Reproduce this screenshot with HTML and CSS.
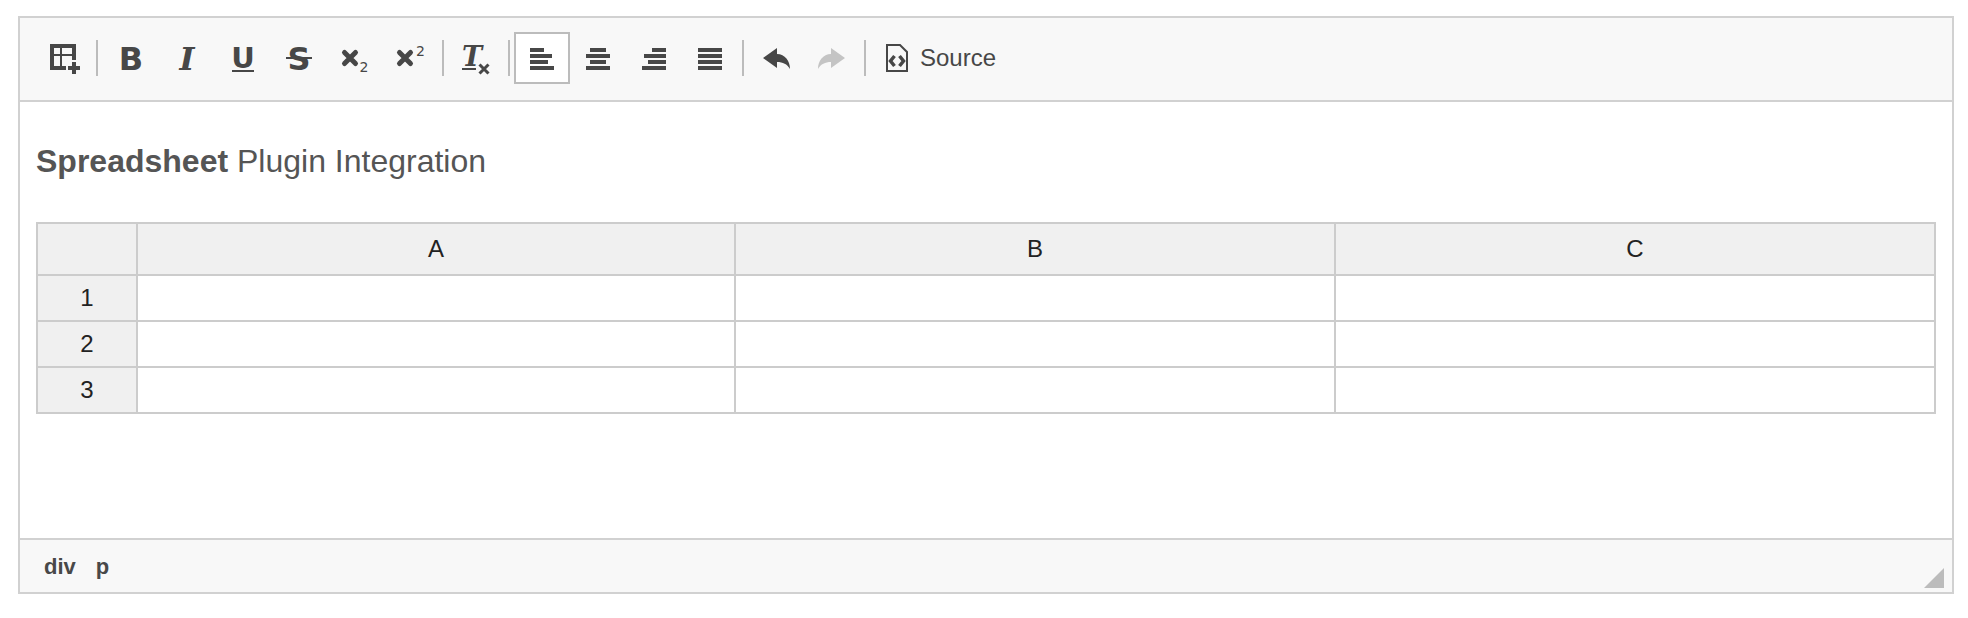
FILE: index.html
```html
<!DOCTYPE html>
<html lang="en">
<head>
  <meta charset="UTF-8">
  <title>Spreadsheet Plugin Integration</title>
  <link rel="stylesheet" href="styles.css">
</head>
<body>

  <div class="editor">
    <div class="toolbar">
      <span class="tool">
        <svg class="icon" viewBox="0 0 32 32">
          <path fill-rule="evenodd" d="M2 2H28V18H24V14H14V24H18V28H2ZM6 6V12H12V6ZM14 6V12H24V6ZM6 14V24H12V14Z"/>
          <path d="M24 20H28V24H32V28H28V32H24V28H20V24H24Z"/>
        </svg>
      </span>
      <span class="sep"></span>
      <span class="tool">
        <svg class="icon" viewBox="0 0 32 32"><text class="glyph sans" x="17" y="28" text-anchor="middle">B</text></svg>
      </span>
      <span class="tool">
        <svg class="icon" viewBox="0 0 32 32"><text class="glyph serif" x="17" y="28" text-anchor="middle">I</text></svg>
      </span>
      <span class="tool">
        <svg class="icon" viewBox="0 0 32 32">
          <text class="glyph sans small" x="17" y="26" text-anchor="middle">U</text>
          <rect x="6" y="28" width="22" height="2"/>
        </svg>
      </span>
      <span class="tool">
        <svg class="icon" viewBox="0 0 32 32">
          <text class="glyph sans" x="17" y="28" text-anchor="middle">S</text>
          <rect x="4" y="15" width="26" height="2"/>
        </svg>
      </span>
      <span class="tool">
        <svg class="icon" viewBox="0 0 32 32">
          <path class="cross" d="M6.500 10.500L17.500 21.500M17.500 10.500L6.500 21.500"/>
          <text class="tiny" x="21.500" y="30">2</text>
        </svg>
      </span>
      <span class="tool">
        <svg class="icon" viewBox="0 0 32 32">
          <path class="cross" d="M5.500 10.500L16.500 21.500M16.500 10.500L5.500 21.500"/>
          <text class="tiny" x="22" y="14">2</text>
        </svg>
      </span>
      <span class="sep"></span>
      <span class="tool">
        <svg class="icon" viewBox="0 0 32 32">
          <text class="glyph serif medium" x="12" y="24" text-anchor="middle">T</text>
          <rect x="2" y="26" width="14" height="2"/>
          <path class="cross thin" d="M19.500 22.500L28.500 31.500M28.500 22.500L19.500 31.500"/>
        </svg>
      </span>
      <span class="sep"></span>
      <span class="tool active">
        <svg class="icon" viewBox="0 0 32 32">
          <rect x="4" y="6" width="14" height="4"/><rect x="4" y="12" width="22" height="4"/>
          <rect x="4" y="18" width="18" height="4"/><rect x="4" y="24" width="24" height="4"/>
        </svg>
      </span>
      <span class="tool">
        <svg class="icon" viewBox="0 0 32 32">
          <rect x="8" y="6" width="16" height="4"/><rect x="4" y="12" width="24" height="4"/>
          <rect x="8" y="18" width="16" height="4"/><rect x="4" y="24" width="24" height="4"/>
        </svg>
      </span>
      <span class="tool">
        <svg class="icon" viewBox="0 0 32 32">
          <rect x="14" y="6" width="14" height="4"/><rect x="6" y="12" width="22" height="4"/>
          <rect x="10" y="18" width="18" height="4"/><rect x="4" y="24" width="24" height="4"/>
        </svg>
      </span>
      <span class="tool">
        <svg class="icon" viewBox="0 0 32 32">
          <rect x="4" y="6" width="24" height="4"/><rect x="4" y="12" width="24" height="4"/>
          <rect x="4" y="18" width="24" height="4"/><rect x="4" y="24" width="24" height="4"/>
        </svg>
      </span>
      <span class="sep"></span>
      <span class="tool">
        <svg class="icon" viewBox="0 0 32 32"><path d="M3 16L17 6V12C25 12 30 19 30 27C27 22 23 20 17 20V26Z"/></svg>
      </span>
      <span class="tool off">
        <svg class="icon" viewBox="0 0 32 32"><path d="M29 16L15 6V12C7 12 2 19 2 27C5 22 9 20 15 20V26Z"/></svg>
      </span>
      <span class="sep"></span>
      <span class="tool source">
        <svg class="icon" viewBox="0 0 32 32">
          <path class="outline" d="M5 3H18L25 10V29H5Z"/>
          <path class="outline bold" d="M12.500 14L8.500 19L12.500 24M17.500 14L21.500 19L17.500 24"/>
        </svg>
        <span class="tool-label">Source</span>
      </span>
    </div>

    <div class="content">
      <p class="title"><strong>Spreadsheet</strong> Plugin Integration</p>
      <table class="sheet">
        <colgroup>
          <col class="col-head">
          <col class="col-a">
          <col class="col-b">
          <col class="col-c">
        </colgroup>
        <thead>
          <tr><th></th><th>A</th><th>B</th><th>C</th></tr>
        </thead>
        <tbody>
          <tr><th>1</th><td></td><td></td><td></td></tr>
          <tr><th>2</th><td></td><td></td><td></td></tr>
          <tr><th>3</th><td></td><td></td><td></td></tr>
        </tbody>
      </table>
    </div>

    <div class="statusbar">
      <span class="path-item">div</span>
      <span class="path-item">p</span>
      <svg class="resizer" viewBox="0 0 20 20"><path d="M20 0V20H0Z"/></svg>
    </div>
  </div>

</body>
</html>
```

FILE: styles.css
```css
body {
  margin: 0;
  padding: 16px 14px 24px 18px;
  background-color: white;
  font-family: "Liberation Sans", Arial, sans-serif;
}
.editor {
  display: flex;
  flex-direction: column;
  height: 578px;
  border: 2px solid #d1d1d1;
  box-sizing: border-box;
}
.toolbar {
  display: flex;
  align-items: center;
  height: 84px;
  padding: 0 0 2px 16px;
  box-sizing: border-box;
  background-color: #f8f8f8;
  border-bottom: 2px solid #d1d1d1;
}
.tool {
  display: flex;
  align-items: center;
  justify-content: center;
  width: 56px;
  height: 52px;
  box-sizing: border-box;
  fill: #474747;
  color: #474747;
}
.tool.active {
  background-color: white;
  border: 2px solid #bcbcbc;
}
.tool.off {
  fill: #c4c4c4;
}
.tool.source {
  width: auto;
  padding-left: 12px;
}
.tool-label {
  margin-left: 6px;
  font-size: 24px;
}
.icon {
  width: 32px;
  height: 32px;
  overflow: visible;
}
.glyph {
  font-size: 32px;
  font-weight: bold;
}
.glyph.sans {
  font-family: "DejaVu Sans", sans-serif;
}
.glyph.serif {
  font-family: "DejaVu Serif", serif;
  font-style: italic;
}
.glyph.small {
  font-size: 29px;
}
.glyph.medium {
  font-size: 27px;
}
.tiny {
  font-family: "DejaVu Sans", sans-serif;
  font-size: 14px;
}
.cross {
  fill: none;
  stroke: #474747;
  stroke-width: 5;
  stroke-linecap: round;
}
.cross.thin {
  stroke-width: 3;
  stroke-linecap: butt;
}
.outline {
  fill: none;
  stroke: #474747;
  stroke-width: 2;
}
.outline.bold {
  stroke-width: 3.500;
}
.sep {
  width: 2px;
  height: 36px;
  margin: 0 4px;
  background-color: #bcbcbc;
}
.content {
  flex: 1;
  padding: 0 16px;
  background-color: white;
}
.title {
  margin: 41px 0 0;
  font-size: 32px;
  line-height: 36px;
  color: #555;
}
.sheet {
  width: 1898px;
  margin-top: 43px;
  table-layout: fixed;
  border-collapse: collapse;
  font-size: 24px;
  color: #222;
}
.col-head {
  width: 100px;
}
.col-a {
  width: 598px;
}
.col-b,
.col-c {
  width: 600px;
}
.sheet th,
.sheet td {
  padding: 0;
  border: 2px solid #ccc;
  height: 44px;
  font-weight: normal;
  text-align: center;
}
.sheet thead th {
  height: 50px;
}
.sheet th {
  background-color: #f0f0f0;
}
.statusbar {
  display: flex;
  align-items: center;
  height: 54px;
  padding: 2px 8px 0 24px;
  box-sizing: border-box;
  background-color: #f8f8f8;
  border-top: 2px solid #d1d1d1;
  font-size: 22px;
  font-weight: bold;
  color: #484848;
}
.path-item {
  margin-right: 20px;
}
.resizer {
  width: 20px;
  height: 20px;
  margin: 22px 0 0 auto;
  fill: #bcbcbc;
}
```
